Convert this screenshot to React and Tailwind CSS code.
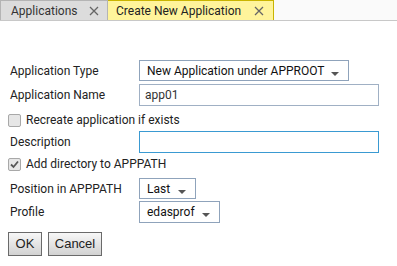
import React from 'react';

function Arrow() {
  return (
    <svg width="8" height="4" viewBox="0 0 8 4" className="mt-[6px] shrink-0">
      <path d="M0 0h8L4 4z" fill="#555" />
    </svg>
  );
}

function Close() {
  return (
    <svg width="10" height="10" viewBox="0 0 10 10" className="shrink-0">
      <path d="M1 1l8 8M9 1L1 9" stroke="#666" strokeWidth="1.3" />
    </svg>
  );
}

function Select({ value, width }) {
  return (
    <div
      className={`flex items-center justify-between h-[21px] border border-[#8fa3bb] bg-white pl-[7px] pr-[9px] text-[#111] whitespace-nowrap ${width}`}
    >
      <span>{value}</span>
      <Arrow />
    </div>
  );
}

function Check({ checked }) {
  return (
    <div className="w-[13px] h-[13px] rounded-[2px] border border-[#a8a8a8] bg-[#e6e6e6] flex items-center justify-center">
      {checked && (
        <svg width="9" height="9" viewBox="0 0 9 9">
          <path d="M1 4.5l2.5 2.5L8 1.5" stroke="#555" strokeWidth="1.8" fill="none" />
        </svg>
      )}
    </div>
  );
}

function Row({ label, children, h }) {
  return (
    <div className={`flex items-center ${h}`}>
      <div className="w-[139px] pl-[10px] whitespace-nowrap">{label}</div>
      {children}
    </div>
  );
}

export default function App() {
  return (
    <div className="w-[397px] h-[266px] bg-white text-[12px] text-[#222]" style={{ fontFamily: 'Roboto, sans-serif' }}>
      <div className="flex h-[21px] border-b border-[#c8c8c8] bg-[#fafafa]">
        <div className="flex items-center w-[108px] border border-b-0 border-[#b4b4b4] bg-[#dcdcdc] pl-[10px] pr-[8px] text-[#333]">
          <span className="flex-1 whitespace-nowrap">Applications</span>
          <Close />
        </div>
        <div className="flex items-center w-[166px] border border-b-0 border-l-0 border-[#c9b400] bg-[#fff49b] pl-[8px] pr-[9px] text-[#222]">
          <span className="flex-1 whitespace-nowrap">Create New Application</span>
          <Close />
        </div>
      </div>

      <div className="pt-[39px]">
        <Row label="Application Type" h="h-[21px]">
          <Select value="New Application under APPROOT" width="w-[210px]" />
        </Row>
        <Row label="Application Name" h="h-[22px] mt-[3px]">
          <div className="h-[22px] w-[240px] border border-[#a0b0c4] bg-white pl-[5px] flex items-center text-[#333]">app01</div>
        </Row>
        <div className="flex items-center h-[20px] mt-[4px] pl-[8px] gap-[5px]">
          <Check />
          <span>Recreate application if exists</span>
        </div>
        <Row label="Description" h="h-[22px] mt-[1px]">
          <div className="h-[22px] w-[240px] border border-[#3a9ad2] bg-white" />
        </Row>
        <div className="flex items-center h-[20px] mt-[1px] pl-[8px] gap-[5px]">
          <Check checked />
          <span>Add directory to APPPATH</span>
        </div>
        <Row label="Position in APPPATH" h="h-[21px] mt-[4px]">
          <Select value="Last" width="w-[57px]" />
        </Row>
        <Row label="Profile" h="h-[22px] mt-[2px]">
          <Select value="edasprof" width="w-[81px] h-[22px]" />
        </Row>
        <div className="flex gap-[6px] pl-[8px] mt-[9px]" style={{ fontFamily: '"Liberation Sans", Arial, sans-serif' }}>
          <button className="h-[24px] w-[34px] border border-[#6a6a6a] bg-gradient-to-b from-[#f7f7f7] to-[#d2d2d2] text-[13px] text-[#222]">OK</button>
          <button className="h-[24px] w-[54px] border border-[#6a6a6a] bg-gradient-to-b from-[#f7f7f7] to-[#d2d2d2] text-[13px] text-[#222]">Cancel</button>
        </div>
      </div>
    </div>
  );
}
